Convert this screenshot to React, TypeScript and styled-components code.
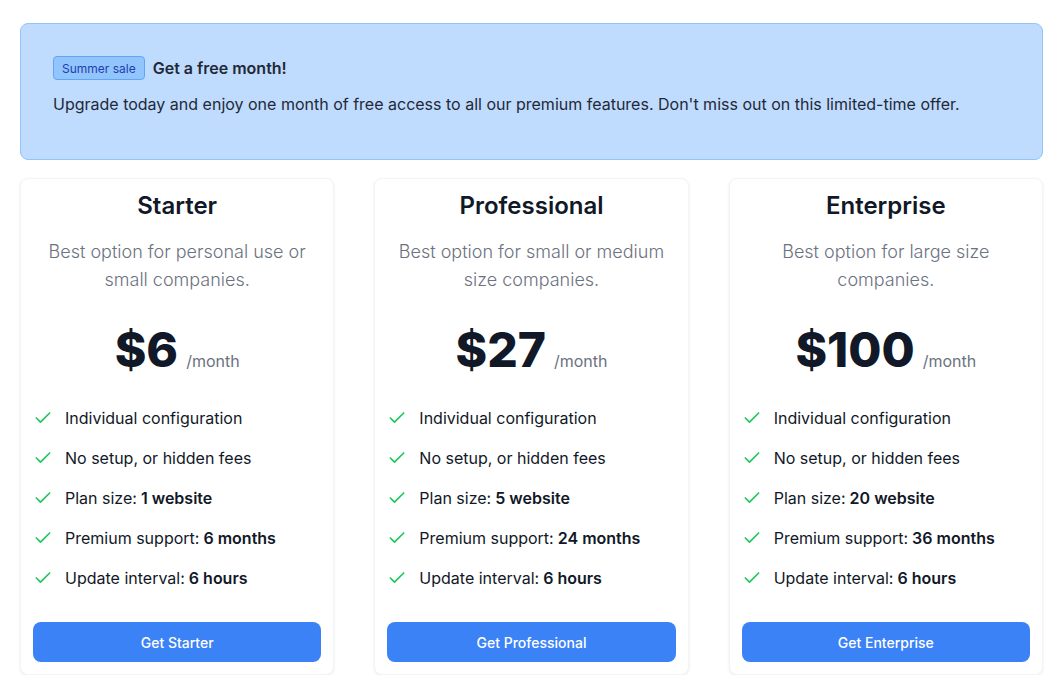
import React from "react";
import styled, { createGlobalStyle } from "styled-components";
import { Check } from "lucide-react";

const GlobalStyle = createGlobalStyle`
  * { box-sizing: border-box; }
  body {
    margin: 0;
    background: #ffffff;
    font-family: Inter, "Noto Sans", sans-serif;
    color: #111827;
  }
`;

type Feature = { label: string; value?: string };
type Plan = {
  name: string;
  description: string;
  price: string;
  features: Feature[];
};

const plans: Plan[] = [
  {
    name: "Starter",
    description: "Best option for personal use or small companies.",
    price: "$6",
    features: [
      { label: "Individual configuration" },
      { label: "No setup, or hidden fees" },
      { label: "Plan size:", value: "1 website" },
      { label: "Premium support:", value: "6 months" },
      { label: "Update interval:", value: "6 hours" },
    ],
  },
  {
    name: "Professional",
    description: "Best option for small or medium size companies.",
    price: "$27",
    features: [
      { label: "Individual configuration" },
      { label: "No setup, or hidden fees" },
      { label: "Plan size:", value: "5 website" },
      { label: "Premium support:", value: "24 months" },
      { label: "Update interval:", value: "6 hours" },
    ],
  },
  {
    name: "Enterprise",
    description: "Best option for large size companies.",
    price: "$100",
    features: [
      { label: "Individual configuration" },
      { label: "No setup, or hidden fees" },
      { label: "Plan size:", value: "20 website" },
      { label: "Premium support:", value: "36 months" },
      { label: "Update interval:", value: "6 hours" },
    ],
  },
];

const App = () => {
  return (
    <Page>
      <GlobalStyle />
      <Banner>
        <BannerHead>
          <Badge>Summer sale</Badge>
          <BannerTitle>Get a free month!</BannerTitle>
        </BannerHead>
        <BannerText>
          Upgrade today and enjoy one month of free access to all our premium
          features. Don't miss out on this limited-time offer.
        </BannerText>
      </Banner>

      <Cards>
        {plans.map((plan) => (
          <Card key={plan.name}>
            <PlanName>{plan.name}</PlanName>
            <PlanDesc>{plan.description}</PlanDesc>
            <PriceRow>
              <Price>{plan.price}</Price>
              <Period>/month</Period>
            </PriceRow>
            <FeatureList>
              {plan.features.map((f) => (
                <FeatureItem key={f.label}>
                  <Check size={20} color="#22c55e" strokeWidth={2} />
                  <span>
                    {f.label}
                    {f.value && <strong> {f.value}</strong>}
                  </span>
                </FeatureItem>
              ))}
            </FeatureList>
            <CtaButton type="button">Get {plan.name}</CtaButton>
          </Card>
        ))}
      </Cards>
    </Page>
  );
};

export default App;

const Page = styled.div`
  width: 1023px;
  margin-left: 20px;
  padding-top: 23px;
  display: flex;
  flex-direction: column;
  gap: 18px;
`;

const Banner = styled.div`
  background: #bfdbfe;
  border: 1px solid #93c5fd;
  border-radius: 8px;
  padding: 32px 32px 43px;
`;

const BannerHead = styled.div`
  display: flex;
  align-items: center;
  gap: 8px;
`;

const Badge = styled.span`
  display: inline-flex;
  align-items: center;
  height: 24px;
  padding: 0 8px;
  background: #93c5fd;
  border: 1px solid #60a5fa;
  border-radius: 4px;
  color: #1e40af;
  font-size: 12px;
  font-weight: 400;
`;

const BannerTitle = styled.span`
  font-size: 16px;
  font-weight: 600;
  line-height: 24px;
  color: #1f2937;
`;

const BannerText = styled.p`
  margin: 12px 0 0;
  font-size: 16px;
  line-height: 24px;
  color: #1f2937;
`;

const Cards = styled.div`
  display: grid;
  grid-template-columns: repeat(3, 1fr);
  column-gap: 40px;
`;

const Card = styled.div`
  display: flex;
  flex-direction: column;
  padding: 11px 12px 12px;
  background: #ffffff;
  border: 1px solid #f3f4f6;
  border-radius: 8px;
  box-shadow: 0 1px 3px rgba(0, 0, 0, 0.08);
  text-align: center;
`;

const PlanName = styled.h3`
  margin: 0 0 16px;
  font-size: 24px;
  line-height: 32px;
  font-weight: 600;
  color: #111827;
`;

const PlanDesc = styled.p`
  margin: 0;
  font-size: 18px;
  line-height: 28px;
  font-weight: 300;
  color: #6b7280;
`;

const PriceRow = styled.div`
  display: flex;
  justify-content: center;
  align-items: baseline;
  margin: 32px 0;
`;

const Price = styled.span`
  margin-right: 8px;
  font-size: 48px;
  line-height: 48px;
  font-weight: 800;
  color: #111827;
`;

const Period = styled.span`
  font-size: 16px;
  color: #6b7280;
`;

const FeatureList = styled.ul`
  list-style: none;
  margin: 0 0 32px;
  padding: 0;
  display: flex;
  flex-direction: column;
  gap: 16px;
  text-align: left;
`;

const FeatureItem = styled.li`
  display: flex;
  align-items: center;
  gap: 12px;
  font-size: 16px;
  line-height: 24px;
  color: #111827;

  strong {
    font-weight: 600;
  }
`;

const CtaButton = styled.button`
  height: 40px;
  border: none;
  border-radius: 8px;
  background: #3b82f6;
  color: #ffffff;
  font-family: Inter, "Noto Sans", sans-serif;
  font-size: 14px;
  font-weight: 500;
  cursor: pointer;
`;
